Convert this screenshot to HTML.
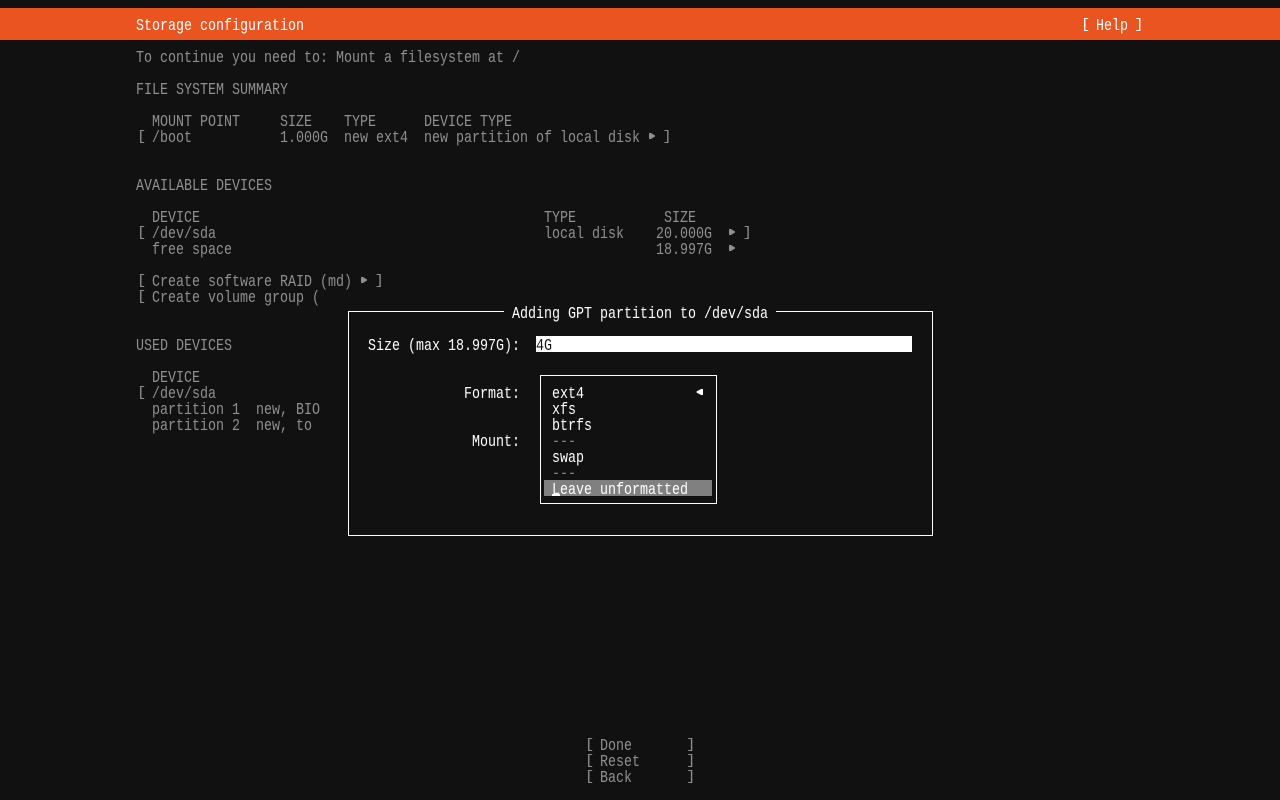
<!DOCTYPE html>
<html>
<head>
<meta charset="utf-8">
<style>
html,body{margin:0;padding:0;width:1280px;height:800px;overflow:hidden;background:#111111}
#s{position:relative;width:1280px;height:800px;overflow:hidden;background:#111111}
.t{position:absolute;margin-top:3px;height:16px;line-height:16px;white-space:pre;font-family:"Liberation Mono",monospace;font-size:17px;color:#8f8f8f;transform:scale(.7843,1);transform-origin:0 0}
.w{color:#fff}
.d{color:#808080}
.b{position:absolute;box-sizing:border-box;border:1px solid #fff}
.r{position:absolute;background:#fff}
svg{position:absolute}
.l,.c{display:inline-block;width:10.2px;font-size:14px;line-height:16px;text-align:center;position:relative;top:-2px}
.l{left:1.5px;transform:scaleX(1.4)}
.c{left:-1.5px;transform:scaleX(1.4)}
</style>
</head>
<body>
<div id="s">
<div style="position:absolute;left:0;top:8px;width:1280px;height:32px;background:#E95420"></div>
<div class="t w" style="left:136px;top:16px">Storage configuration</div>
<div class="t w" style="left:1080px;top:16px"><span class="l">[</span> Help <span class="c">]</span></div>

<div class="t" style="left:136px;top:48px">To continue you need to: Mount a filesystem at /</div>
<div class="t" style="left:136px;top:80px">FILE SYSTEM SUMMARY</div>
<div class="t" style="left:136px;top:112px">  MOUNT POINT     SIZE    TYPE      DEVICE TYPE</div>
<div class="t" style="left:136px;top:128px"><span class="l">[</span> /boot           1.000G  new ext4  new partition of local disk   <span class="c">]</span></div>
<svg style="left:648px;top:132px" width="8" height="8"><path d="M1 1H3L7 3.5V4.5L3 7H1Z" fill="#8f8f8f"/></svg>

<div class="t" style="left:136px;top:176px">AVAILABLE DEVICES</div>
<div class="t" style="left:152px;top:208px">DEVICE</div>
<div class="t" style="left:544px;top:208px">TYPE</div>
<div class="t" style="left:664px;top:208px">SIZE</div>
<div class="t" style="left:136px;top:224px"><span class="l">[</span> /dev/sda</div>
<div class="t" style="left:544px;top:224px">local disk</div>
<div class="t" style="left:656px;top:224px">20.000G</div>
<div class="t" style="left:744px;top:224px"><span class="c">]</span></div>
<svg style="left:728px;top:228px" width="8" height="8"><path d="M1 1H3L7 3.5V4.5L3 7H1Z" fill="#8f8f8f"/></svg>
<div class="t" style="left:152px;top:240px">free space</div>
<div class="t" style="left:656px;top:240px">18.997G</div>
<svg style="left:728px;top:244px" width="8" height="8"><path d="M1 1H3L7 3.5V4.5L3 7H1Z" fill="#8f8f8f"/></svg>

<div class="t" style="left:136px;top:272px"><span class="l">[</span> Create software RAID (md)   <span class="c">]</span></div>
<svg style="left:360px;top:276px" width="8" height="8"><path d="M1 1H3L7 3.5V4.5L3 7H1Z" fill="#8f8f8f"/></svg>
<div class="t" style="left:136px;top:288px"><span class="l">[</span> Create volume group (</div>

<div class="t" style="left:136px;top:336px">USED DEVICES</div>
<div class="t" style="left:152px;top:368px">DEVICE</div>
<div class="t" style="left:136px;top:384px"><span class="l">[</span> /dev/sda</div>
<div class="t" style="left:152px;top:400px">partition 1  new, BIO</div>
<div class="t" style="left:152px;top:416px">partition 2  new, to</div>

<div class="b" style="left:348px;top:311px;width:585px;height:225px;background:#111111"></div>
<div style="position:absolute;left:504px;top:304px;width:272px;height:16px;background:#111111"></div>
<div class="t w" style="left:512px;top:304px">Adding GPT partition to /dev/sda</div>

<div class="t w" style="left:368px;top:336px">Size (max 18.997G):</div>
<div class="r" style="left:536px;top:336px;width:376px;height:16px"></div>
<div class="t" style="left:536px;top:336px;color:#111111">4G</div>

<div class="t w" style="left:464px;top:384px">Format:</div>
<div class="t w" style="left:472px;top:432px">Mount:</div>

<div class="b" style="left:540px;top:375px;width:177px;height:129px"></div>
<div class="t w" style="left:552px;top:384px">ext4</div>
<svg style="left:696px;top:388px" width="8" height="8"><path d="M7 1H5L0.5 3.5V4.5L5 7H7Z" fill="#fff"/></svg>
<div class="t w" style="left:552px;top:400px">xfs</div>
<div class="t w" style="left:552px;top:416px">btrfs</div>
<div class="t d" style="left:552px;top:432px">---</div>
<div class="t w" style="left:552px;top:448px">swap</div>
<div class="t d" style="left:552px;top:464px">---</div>
<div style="position:absolute;left:544px;top:480px;width:168px;height:16px;background:#808080"></div>
<div class="t w" style="left:552px;top:480px">Leave unformatted</div>
<div class="r" style="left:552px;top:494px;width:8px;height:2px"></div>

<div class="t" style="left:584px;top:736px"><span class="l">[</span> Done       <span class="c">]</span></div>
<div class="t" style="left:584px;top:752px"><span class="l">[</span> Reset      <span class="c">]</span></div>
<div class="t" style="left:584px;top:768px"><span class="l">[</span> Back       <span class="c">]</span></div>
</div>
</body>
</html>
